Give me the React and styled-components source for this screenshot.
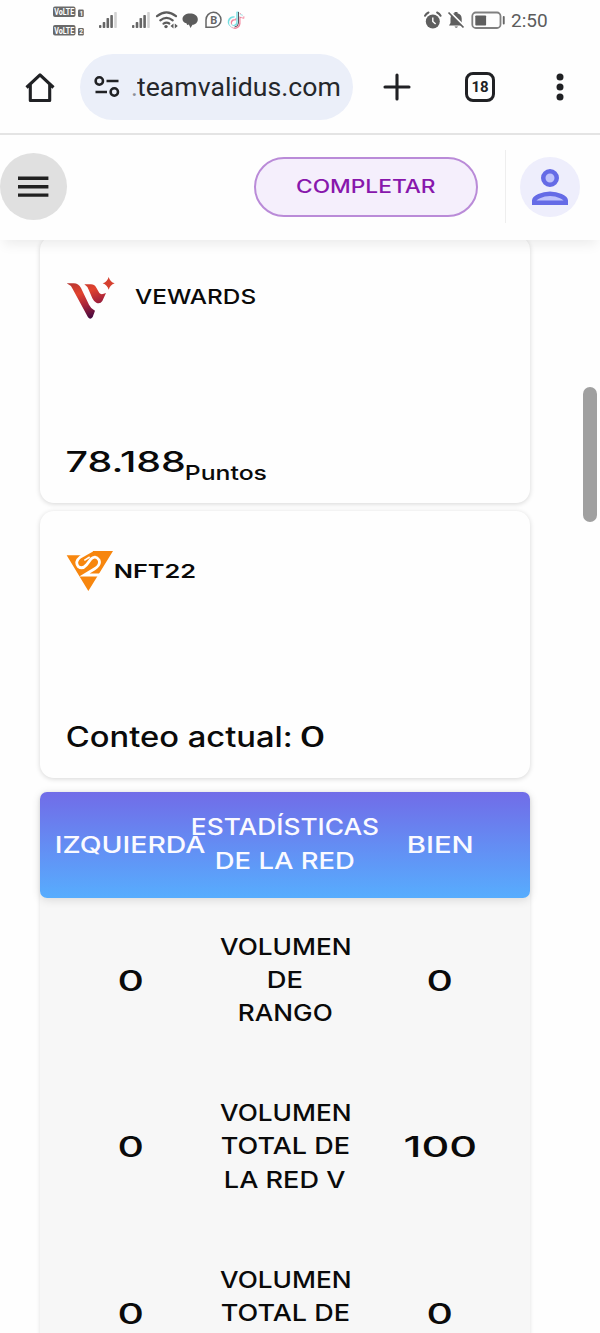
import React, { useLayoutEffect, useRef, useState } from 'react'
import styled, { createGlobalStyle } from 'styled-components';

const rows = [
  { left: '0', lines: [['VOLUMEN', 130], ['DE', 34], ['RANGO', 93]], right: '0', rightWidth: 23 },
  { left: '0', lines: [['VOLUMEN', 130], ['TOTAL DE', 127], ['LA RED V', 120]], right: '100', rightWidth: 70 },
  { left: '0', lines: [['VOLUMEN', 130], ['TOTAL DE', 127]], right: '0', rightWidth: 23 },
];

// Stretches a line of text so that its ink fills the given width
const Wide = ({ width, children, ...rest }) => {
  const ref = useRef(null);
  const [transform, setTransform] = useState('none');

  useLayoutEffect(() => {
    const style = getComputedStyle(ref.current);
    const ctx = document.createElement('canvas').getContext('2d');
    ctx.font = `${style.fontWeight} ${style.fontSize} ${style.fontFamily}`;
    const m = ctx.measureText(children);
    const scale = width / (m.actualBoundingBoxLeft + m.actualBoundingBoxRight);
    setTransform(`translateX(${m.actualBoundingBoxLeft * scale}px) scaleX(${scale})`);
  }, [width, children]);

  return (
    <WideBox ref={ref} $width={width} {...rest}>
      <WideText style={{ transform }}>{children}</WideText>
    </WideBox>
  );
}

const StatusIcons = () => (
  <svg width="196" height="32" viewBox="50 4 196 32">
    <g fill="#6a6a6a">
      <rect x="53" y="6.5" width="22.5" height="10.5" rx="2" />
      <rect x="53" y="25" width="22.5" height="10.5" rx="2" />
      <rect x="78" y="9.5" width="5.8" height="7.5" rx="1.2" />
      <rect x="78" y="28" width="5.8" height="7.5" rx="1.2" />
    </g>
    <g fill="#fff" fontFamily="Roboto, sans-serif" fontWeight="700">
      <text x="54.3" y="15.2" fontSize="9.2" textLength="20" lengthAdjust="spacingAndGlyphs">VoLTE</text>
      <text x="54.3" y="33.7" fontSize="9.2" textLength="20" lengthAdjust="spacingAndGlyphs">VoLTE</text>
      <text x="79.4" y="15.6" fontSize="6.5">1</text>
      <text x="79.2" y="34.1" fontSize="6.5">2</text>
    </g>
    {[99, 132].map((x) => (
      <g key={x} fill="#666">
        <rect x={x} y="25" width="2.4" height="3" rx=".8" />
        <rect x={x + 3.7} y="22" width="2.6" height="6" rx=".8" />
        <rect x={x + 7.5} y="18" width="2.6" height="10" rx=".8" />
        <rect x={x + 11.3} y="15" width="2.6" height="13" rx=".8" />
        <rect x={x + 15.2} y="12" width="2.6" height="16" rx=".8" fill="#d2d2d2" />
      </g>
    ))}
    <g fill="none" stroke="#5c5c5c" strokeWidth="2.200" strokeLinecap="round">
      <path d="M157 16.2Q166.500 8.500 176 16.200M160.300 20.300Q166.500 15.300 172.700 20.300M163.500 23.700Q166.500 21.700 169.300 23.500" />
    </g>
    <circle cx="166" cy="26.600" r="1.700" fill="#5c5c5c" />
    <path d="M173.500 23.500v5l-3-2.500zM174.800 23.500v5l3-2.500z" fill="#5c5c5c" />
    <path d="M182.500 19c0-3.500 3.500-5.500 7.500-5.500s7.800 2 7.800 5.700c0 3.200-2.300 5.300-5.300 5.600L190.500 28l-1.600-3.400-1.700.3-.8-1.700c-2.500-.4-3.900-2-3.900-4.200z" fill="#5c5c5c" />
    <path d="M206 27.300V20A7.500 7.500 0 1 1 213.500 27.300z" fill="none" stroke="#666" strokeWidth="1.500" />
    <text x="210.200" y="23.800" fontSize="11" fontFamily="Roboto, sans-serif" fontWeight="700" fill="#666">B</text>
    <g fill="none" strokeWidth="2.400">
      <path d="M235.500 18.500a4.300 4.300 0 1 0 3 4.300V12.500c.5 2.700 2.500 4 5 4.300" stroke="#f3839c" transform="translate(.8 .8)" />
      <path d="M235.500 18.500a4.300 4.300 0 1 0 3 4.300V12.500c.5 2.700 2.500 4 5 4.300" stroke="#75dfe2" transform="translate(-1 -.8)" />
      <path d="M235.500 18.500a4.300 4.300 0 1 0 3 4.300V12.500c.5 2.700 2.500 4 5 4.300" stroke="#fafafa" strokeWidth="1.700" />
      <path d="M238.500 12v11a4.300 4.300 0 0 1-4 4" stroke="#5a5560" strokeWidth="1" />
    </g>
  </svg>
);

const AlertIcons = () => (
  <svg width="84" height="24" viewBox="423 8 84 24">
    <circle cx="432.800" cy="21.500" r="7" fill="#5f5f5f" />
    <path d="M425 15.800q1.200-2.300 3.500-3.300M440.600 15.800q-1.200-2.300-3.500-3.300" fill="none" stroke="#5f5f5f" strokeWidth="2" strokeLinecap="round" />
    <path d="M432.800 17.500v4l2.800 2.600" fill="none" stroke="#fff" strokeWidth="1.400" />
    <path d="M449 25.500l1.500-2.500v-4.500c0-3 1.700-4.700 4-5.200V12h3v1.300c2.500.5 4.200 2.400 4.200 5.200V23l1.500 2.500z" fill="#5f5f5f" />
    <path d="M454.500 26.500h3.500q-1.700 2.400-3.500 0z" fill="#5f5f5f" />
    <path d="M449.500 11.500L464.500 26.500" stroke="#fff" strokeWidth="2" />
    <path d="M448.500 12.500L463.500 27.500" stroke="#5f5f5f" strokeWidth="1.700" />
    <rect x="472.300" y="12.500" width="28.200" height="15.500" rx="3.500" fill="none" stroke="#808080" strokeWidth="1.800" />
    <rect x="475.300" y="15.500" width="10.800" height="10" rx=".8" fill="#5f5f5f" />
    <rect x="502.800" y="16" width="1.900" height="8.500" rx=".9" fill="#666" />
  </svg>
);

const HomeIcon = () => (
  <svg width="32" height="32" viewBox="0 0 32 32" fill="none" stroke="#202124" strokeWidth="3.100">
    <path d="M2.500 16.500L16 3.800L29.500 16.500M6.300 13.500V29.500H25.700V13.500" strokeLinejoin="round" />
  </svg>
);

const TuneIcon = () => (
  <svg width="26" height="22" viewBox="0 0 26 22" fill="none" stroke="#202124" strokeWidth="2.500">
    <circle cx="5.300" cy="5" r="3.700" />
    <circle cx="20.300" cy="16" r="3.700" />
    <path d="M12.500 5H24.500M1.500 16H13" />
  </svg>
);

const VewardsLogo = () => (
  <svg width="50" height="44" viewBox="78 44 150 132">
    <defs>
      <linearGradient id="vewards" gradientUnits="userSpaceOnUse" x1="100" y1="60" x2="140" y2="178">
        <stop offset="0" stopColor="#b33632" />
        <stop offset=".35" stopColor="#e2432e" />
        <stop offset=".65" stopColor="#a8243a" />
        <stop offset="1" stopColor="#43083f" />
      </linearGradient>
    </defs>
    <g fill="url(#vewards)">
      <path d="M80 69H101Q116 69 123 83L147 133Q153 146 165 151L158 170Q151 180 144 171L98 86Q92 74 80 69z" />
      <path d="M133 72H153Q163 72 169 82L178 98Q183 105 198 98L187 122Q180 132 169 127Q161 123 157 114L146 88Q142 78 133 72z" />
      <path d="M206 50Q210 65 224 69Q210 74 206 88Q202 74 188 69Q202 65 206 50z" fill="#d5402f" />
    </g>
  </svg>
);

const NftLogo = () => (
  <svg width="48" height="42" viewBox="109 364 144 126">
    <path d="M111 377H156L185 364H250L176 484z" fill="#f7860e" />
    <path d="M188 362L152 382Q134 396 146 411Q158 420 170 406L183 389Q197 375 208 391Q214 406 194 418L164 436H214" fill="none" stroke="#fff" strokeWidth="8.500" />
    <path d="M180 382L164 392" fill="none" stroke="#fff" strokeWidth="5" />
  </svg>
);

const App = () => {
  return (
    <Page>
      <GlobalStyle />
      <StatusBar>
        <StatusIcons />
        <StatusRight>
          <AlertIcons />
          <Clock width={36}>2:50</Clock>
        </StatusRight>
      </StatusBar>

      <BrowserBar>
        <HomeIcon />
        <UrlPill>
          <TuneIcon />
          <Dot>.</Dot>
          <Url width={203}>teamvalidus.com</Url>
        </UrlPill>
        <BrowserActions>
          <svg width="28" height="28" viewBox="0 0 28 28" stroke="#202124" strokeWidth="3.100" strokeLinecap="round">
            <path d="M14 2V26M2 14H26" />
          </svg>
          <TabCount>18</TabCount>
          <svg width="8" height="28" viewBox="0 0 8 28" fill="#202124">
            <circle cx="4" cy="4" r="3.500" />
            <circle cx="4" cy="14" r="3.500" />
            <circle cx="4" cy="24" r="3.500" />
          </svg>
        </BrowserActions>
      </BrowserBar>

      <AppHeader>
        <MenuButton>
          <svg width="32" height="22" viewBox="0 0 32 22" fill="#202020">
            <path d="M1 .6H31.400V4H1zM1 9H31.400V12.400H1zM1 17.400H31.400V20.800H1z" />
          </svg>
        </MenuButton>
        <HeaderRight>
          <CompleteButton><Wide width={140}>COMPLETAR</Wide></CompleteButton>
          <Divider />
          <Avatar>
            <svg width="54" height="54" viewBox="0 0 24 24">
              <circle cx="12" cy="8" r="3" fill="#bfc2fb" stroke="#656be6" strokeWidth="2" />
              <path d="M5 19v-1c0-1.200 3.400-3 7-3s7 1.800 7 3v1z" fill="#bfc2fb" stroke="#656be6" strokeWidth="2" />
            </svg>
          </Avatar>
        </HeaderRight>
      </AppHeader>

      <Content>
        <Card>
          <CardHead $gap={19}>
            <VewardsLogo />
            <CardTitle width={120}>VEWARDS</CardTitle>
          </CardHead>
          <Amount $gap={1}>
            <Wide width={118}>78.188</Wide>
            <Unit width={80}>Puntos</Unit>
          </Amount>
        </Card>
        <Card>
          <CardHead $gap={0}>
            <NftLogo />
            <BrandName width={80}>NFT22</BrandName>
          </CardHead>
          <Amount $gap={10}>
            <Wide width={224}>Conteo actual:</Wide>
            <Wide width={23}>0</Wide>
          </Amount>
        </Card>

        <Table>
          <TableHead>
            <Wide width={149}>IZQUIERDA</Wide>
            <HeadTitle>
              <Wide width={186}>ESTADÍSTICAS</Wide>
              <Wide width={138}>DE LA RED</Wide>
            </HeadTitle>
            <Wide width={64}>BIEN</Wide>
          </TableHead>
          <TableBody>
            {rows.map((row, i) => (
              <Row key={i}>
                <Value width={23}>{row.left}</Value>
                <Label>
                  {row.lines.map(([text, width]) => <Wide key={text} width={width}>{text}</Wide>)}
                </Label>
                <Value width={row.rightWidth}>{row.right}</Value>
              </Row>
            ))}
          </TableBody>
        </Table>
      </Content>
      <ScrollThumb />
    </Page>
  );
}

export default App;

const GlobalStyle = createGlobalStyle`
* {
  box-sizing: border-box;
}
body {
  margin: 0;
  background-color: #fefefe;
}
svg {
  display: block;
  flex-shrink: 0;
}
`;

const Page = styled.div`
  position: relative;
  width: 600px;
  height: 1333px;
  overflow: hidden;
  background-color: #fefefe;
  color: #0a0a0a;
  font-family: Inter, "Liberation Sans", sans-serif;
`;

const WideBox = styled.span`
  display: block;
  flex-shrink: 0;
  width: ${({ $width }) => $width}px;
  white-space: nowrap;
`;

const WideText = styled.span`
  display: inline-block;
  transform-origin: left center;
`;

const StatusBar = styled.div`
  display: flex;
  justify-content: space-between;
  height: 40px;
  padding: 4px 53px 0 50px;
`;

const StatusRight = styled.div`
  display: flex;
  gap: 4px;
  padding-top: 4px;
`;

const Clock = styled(Wide)`
  font: 400 19px/25px Roboto, sans-serif;
  color: #5c5c5c;
`;

const BrowserBar = styled.div`
  display: flex;
  align-items: center;
  height: 95px;
  padding-left: 24px;
  border-bottom: 2px solid #e4e4e4;
`;

const UrlPill = styled.div`
  display: flex;
  align-items: center;
  width: 273px;
  height: 66px;
  margin-left: 24px;
  padding-left: 14px;
  border-radius: 33px;
  background-color: #ebeff9;
`;

const Dot = styled.span`
  width: 6px;
  margin-left: 11px;
  color: #8d9098;
  font: 400 26px/32px Roboto, sans-serif;
`;

const Url = styled(Wide)`
  padding-top: 1px;
  font: 400 26px/32px Roboto, sans-serif;
  color: #25272b;
`;

const BrowserActions = styled.div`
  display: flex;
  flex: 1;
  align-items: center;
  padding-left: 30px;

  svg:last-child {
    margin-left: 61px;
  }
`;

const TabCount = styled.div`
  display: flex;
  align-items: center;
  justify-content: center;
  width: 30px;
  height: 30px;
  margin-left: 54px;
  border: 3px solid #202124;
  border-radius: 8px;
  color: #202124;
  font: 700 15px/24px Roboto, sans-serif;
`;

const AppHeader = styled.header`
  position: relative;
  z-index: 1;
  display: flex;
  align-items: center;
  justify-content: space-between;
  height: 105px;
  padding: 0 20px 2px 0;
  background-color: #fefefe;
  box-shadow: 0 8px 12px -4px rgba(0, 0, 0, 0.08);
`;

const MenuButton = styled.div`
  display: flex;
  align-items: center;
  justify-content: center;
  width: 67px;
  height: 67px;
  padding-right: 1px;
  border-radius: 50%;
  background-color: #e0e0e0;
`;

const HeaderRight = styled.div`
  display: flex;
  align-items: center;
`;

const CompleteButton = styled.div`
  display: flex;
  align-items: center;
  justify-content: center;
  width: 224px;
  height: 60px;
  border: 2px solid #ba8bd8;
  border-radius: 30px;
  background-color: #f5effc;
  color: #8817ac;
  font-size: 18px;
  font-weight: 500;
  line-height: 26px;
`;

const Divider = styled.div`
  width: 1px;
  height: 73px;
  margin: 0 14px 0 27px;
  background-color: #eee;
`;

const Avatar = styled.div`
  display: flex;
  align-items: center;
  justify-content: center;
  width: 60px;
  height: 60px;
  border-radius: 50%;
  background-color: #eeeefc;
`;

const Content = styled.main`
  width: 490px;
  margin: -4px 0 0 40px;
`;

const Card = styled.section`
  display: flex;
  flex-direction: column;
  justify-content: space-between;
  height: 267px;
  margin-bottom: 8px;
  padding: 36px 27px 24px 26px;
  border-radius: 14px;
  background-color: #fefefe;
  box-shadow: 0 1px 5px rgba(0, 0, 0, 0.16);
`;

const CardHead = styled.div`
  display: flex;
  align-items: center;
  gap: ${({ $gap }) => $gap}px;
  height: 50px;
`;

const CardTitle = styled(Wide)`
  font-size: 20px;
  font-weight: 500;
  line-height: 28px;
`;

const BrandName = styled(Wide)`
  margin-left: 1px;
  font-size: 19px;
  font-weight: 600;
  line-height: 28px;
`;

const Amount = styled.div`
  display: flex;
  gap: ${({ $gap }) => $gap}px;
  height: 34px;
  padding-left: 1px;
  font-size: 28px;
  font-weight: 500;
  line-height: 34px;
`;

const Unit = styled(Wide)`
  padding-top: 11px;
  font-size: 20px;
`;

const Table = styled.section`
  margin-top: 14px;
  border-radius: 7px;
  background-color: #f7f7f7;
  box-shadow: 0 1px 4px rgba(0, 0, 0, 0.12);
  font-size: 23px;
  line-height: 33.33px;
`;

const TableHead = styled.div`
  display: grid;
  grid-template-columns: repeat(3, 154.5px);
  align-items: center;
  justify-content: center;
  justify-items: center;
  height: 106px;
  padding-top: 2px;
  border-radius: 7px;
  background: linear-gradient(#716ce8, #57adfe);
  box-shadow: 0 2px 10px rgba(0, 0, 0, 0.12);
  color: #fafaff;
  font-weight: 500;
`;

const HeadTitle = styled.div`
  display: flex;
  flex-direction: column;
  align-items: center;
  padding-bottom: 3px;
`;

const TableBody = styled.div`
  display: flex;
  flex-direction: column;
  gap: 66.67px;
  padding: 32.5px 0 80px;
`;

const Row = styled.div`
  display: grid;
  grid-template-columns: repeat(3, 154.5px);
  justify-content: center;
  justify-items: center;
  height: 100px;
`;

const Label = styled.div`
  display: flex;
  flex-direction: column;
  align-items: center;
  font-weight: 500;
`;

const Value = styled(Wide)`
  height: 100px;
  font-size: 28.5px;
  font-weight: 450;
  line-height: 100px;
`;

const ScrollThumb = styled.div`
  position: absolute;
  top: 387px;
  right: 3px;
  width: 14px;
  height: 135px;
  border-radius: 7px;
  background-color: #a0a0a0;
`;
